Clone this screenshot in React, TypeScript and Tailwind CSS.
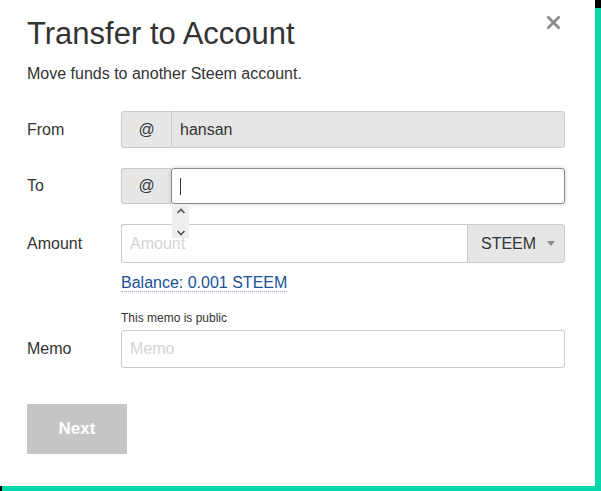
import { X } from "lucide-react";

const label = "w-[94px] shrink-0 text-[16px] text-[#333]";

function Addon({ children }: { children: React.ReactNode }) {
  return (
    <div className="flex w-[50px] shrink-0 items-center justify-center rounded-l-[3px] border border-r-0 border-[#cacaca] bg-[#e7e7e7] text-[16px] text-[#333]">
      {children}
    </div>
  );
}

export default function App() {
  return (
    <div
      className="relative h-[491px] w-[601px] overflow-hidden bg-black"
      style={{ fontFamily: '"Liberation Sans", Arial, sans-serif' }}
    >
      <div className="absolute bottom-0 left-[2px] right-0 top-[8px] bg-[#06d6a9]" />
      <div className="relative h-[486px] w-[595px] bg-white pl-[27px] pr-[30px] pt-[14px]">
        <button className="absolute right-[31px] top-[12px] text-[#8a8a8a]">
          <X size={21} strokeWidth={3} />
        </button>

        <h1 className="text-[31px] leading-[40px] text-[#333]">Transfer to Account</h1>
        <p className="mt-[11px] text-[16px] leading-[18px] text-[#333]">
          Move funds to another Steem account.
        </p>

        <div className="mt-[28px] flex items-center">
          <div className={label}>From</div>
          <div className="flex h-[37px] flex-1">
            <Addon>@</Addon>
            <div className="flex flex-1 items-center rounded-r-[3px] border border-[#cacaca] bg-[#e6e6e6] pl-[8px] text-[16px] text-[#333]">
              hansan
            </div>
          </div>
        </div>

        <div className="mt-[20px] flex items-center">
          <div className={label}>To</div>
          <div className="relative flex h-[36px] flex-1">
            <Addon>@</Addon>
            <div className="flex flex-1 items-center rounded-[3px] border border-[#8a8a8a] bg-white pl-[8px] shadow-[0_0_4px_rgba(0,0,0,0.2)]">
              <span className="h-[17px] w-px bg-[#333]" />
            </div>
            <div className="absolute left-[51px] top-[38px] z-10 flex h-[32px] w-[17px] flex-col items-center justify-between bg-[#eeeeee] py-[1px] text-[#555]">
              <svg width="10" height="8" viewBox="0 0 10 8">
                <path d="M1.5 6 L5 2.5 L8.5 6" fill="none" stroke="currentColor" strokeWidth="1.6" />
              </svg>
              <svg width="10" height="8" viewBox="0 0 10 8">
                <path d="M1.5 2 L5 5.5 L8.5 2" fill="none" stroke="currentColor" strokeWidth="1.6" />
              </svg>
            </div>
          </div>
        </div>

        <div className="mt-[20px] flex items-center">
          <div className={label}>Amount</div>
          <div className="flex h-[39px] flex-1">
            <div className="flex flex-1 items-center rounded-l-[3px] border border-r-0 border-[#cacaca] bg-white pl-[8px] text-[16px] text-[#d4d4d4]">
              Amount
            </div>
            <div className="flex w-[98px] items-center justify-between rounded-r-[3px] border border-[#cacaca] bg-[#e6e6e6] pl-[13px] pr-[9px] text-[16px] text-[#333]">
              STEEM
              <svg width="8" height="6" viewBox="0 0 8 6">
                <path d="M0 0 H8 L4 5 Z" fill="#8a8a8a" />
              </svg>
            </div>
          </div>
        </div>

        <div className="ml-[94px] mt-[8px]">
          <span className="border-b border-dotted border-[#9bb0cc] text-[16px] leading-[18px] text-[#1a5099]">
            Balance: 0.001 STEEM
          </span>
        </div>

        <div className="ml-[94px] mt-[16px] text-[12px] leading-[14px] text-[#333]">
          This memo is public
        </div>

        <div className="mt-[5px] flex items-center">
          <div className={label}>Memo</div>
          <div className="flex h-[38px] flex-1 items-center rounded-[3px] border border-[#cacaca] bg-white pl-[8px] text-[16px] text-[#d4d4d4]">
            Memo
          </div>
        </div>

        <button className="mt-[36px] h-[50px] w-[100px] bg-[#c5c5c6] text-[17px] font-bold text-white">
          Next
        </button>
      </div>
    </div>
  );
}
